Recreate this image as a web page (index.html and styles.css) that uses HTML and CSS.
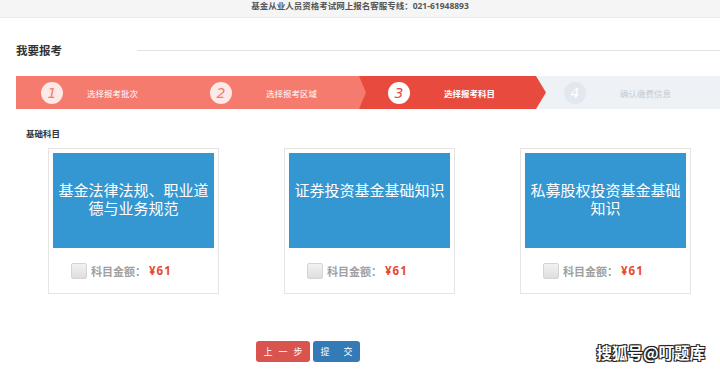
FILE: index.html
```html
<!DOCTYPE html>
<html lang="zh-CN">
<head>
    <meta charset="UTF-8">
    <meta name="viewport" content="width=device-width, initial-scale=1.0">
    <title>我要报考</title>
    <link rel="stylesheet" href="styles.css">
</head>
<body>
    <div class="topbar">基金从业人员资格考试网上报名客服专线：021-61948893</div>

    <div class="page">
        <div class="title-row">
            <h2>我要报考</h2>
            <span class="title-line"></span>
        </div>

        <div class="steps">
            <div class="step step-done step-first">
                <span class="step-num">1</span>
                <span class="step-text">选择报考批次</span>
            </div>
            <div class="step step-done step-second">
                <span class="step-num">2</span>
                <span class="step-text">选择报考区域</span>
            </div>
            <div class="step step-active">
                <span class="step-num">3</span>
                <span class="step-text">选择报考科目</span>
            </div>
            <div class="step step-todo">
                <span class="step-num">4</span>
                <span class="step-text">确认缴费信息</span>
            </div>
        </div>

        <div class="group-title">基础科目</div>

        <div class="subjects">
            <div class="subject">
                <div class="subject-name">基金法律法规、职业道德与业务规范</div>
                <label class="subject-foot">
                    <span class="check"></span>
                    <span class="price-label">科目金额：</span>
                    <span class="price">¥61</span>
                </label>
            </div>
            <div class="subject">
                <div class="subject-name">证券投资基金基础知识</div>
                <label class="subject-foot">
                    <span class="check"></span>
                    <span class="price-label">科目金额：</span>
                    <span class="price">¥61</span>
                </label>
            </div>
            <div class="subject">
                <div class="subject-name">私募股权投资基金基础知识</div>
                <label class="subject-foot">
                    <span class="check"></span>
                    <span class="price-label">科目金额：</span>
                    <span class="price">¥61</span>
                </label>
            </div>
        </div>

        <div class="actions">
            <button class="btn btn-prev">上一步</button>
            <button class="btn btn-submit">提 交</button>
        </div>
    </div>

    <div class="watermark">搜狐号@叮题库</div>
</body>
</html>
```

FILE: styles.css
```css
body {
    margin: 0;
    background: #fff;
    font-family: "Open Sans", "Noto Sans CJK SC", sans-serif;
    color: #333;
    position: relative;
    height: 371px;
    overflow: hidden;
}
.topbar {
    height: 18px;
    background: #f5f5f5;
    border-bottom: 1px solid #ececec;
    box-sizing: border-box;
    text-align: center;
    font-size: 8.5px;
    font-weight: bold;
    line-height: 11px;
    color: #555;
}
.page {
    padding-left: 16px;
}
.title-row {
    display: flex;
    align-items: center;
    height: 24px;
    margin-top: 20px;
}
h2 {
    margin: 0;
    font-size: 11.5px;
    font-weight: bold;
    color: #333;
    width: 121px;
}
.title-line {
    flex: 1;
    height: 1px;
    background: #e3e3e3;
}
.steps {
    display: flex;
    height: 33px;
    margin-top: 14px;
    background: #fbb0a7;
}
.step {
    display: flex;
    align-items: center;
    height: 33px;
    box-sizing: border-box;
    padding-left: 27px;
    gap: 34px;
    font-size: 8.5px;
    color: #fff;
    position: relative;
}
.step-first {
    width: 175px;
    padding-left: 25px;
    gap: 24px;
    background: #f47b6e;
    clip-path: polygon(0 0, calc(100% - 7px) 0, 100% 50%, calc(100% - 7px) 100%, 0 100%);
    z-index: 3;
}
.step-second {
    width: 183px;
    margin-left: -8px;
    background: #f47b6e;
    clip-path: polygon(0 0, calc(100% - 7px) 0, 100% 50%, calc(100% - 7px) 100%, 0 100%, 7px 50%);
    z-index: 2;
}
.step-active {
    width: 188px;
    margin-left: -8px;
    padding-left: 30px;
    background: #e84a3d;
    clip-path: polygon(0 0, calc(100% - 10px) 0, 100% 50%, calc(100% - 10px) 100%, 0 100%, 7px 50%);
    z-index: 1;
    font-weight: bold;
}
.step-todo {
    flex: 1;
    margin-left: -11px;
    padding-left: 29px;
    background: #eef1f6;
    color: #c6cbd4;
}
.step-num {
    width: 22px;
    height: 22px;
    border-radius: 50%;
    background: #fde9e5;
    color: #f47b6e;
    font-family: "DejaVu Sans", sans-serif;
    font-size: 14px;
    font-style: italic;
    font-weight: 200;
    line-height: 22px;
    text-align: center;
    flex: none;
}
.step-active .step-num {
    background: #fff;
    color: #e84a3d;
    font-weight: normal;
}
.step-todo .step-num {
    background: #e3e7ef;
    color: #fff;
}
.group-title {
    margin-top: 19px;
    padding-left: 10px;
    font-size: 8.5px;
    font-weight: bold;
    line-height: 12px;
    color: #333;
}
.subjects {
    display: flex;
    gap: 65px;
    margin-top: 8px;
    padding-left: 32px;
}
.subject {
    width: 171px;
    box-sizing: border-box;
    border: 1px solid #e4e4e4;
    padding: 4px 4px 0;
    background: #fff;
}
.subject-name {
    height: 95px;
    box-sizing: border-box;
    background: #3597d1;
    color: #fff;
    font-size: 15px;
    line-height: 18px;
    padding: 28px 2px 0;
    text-align: center;
}
.subject-foot {
    display: flex;
    align-items: center;
    height: 45px;
    padding-left: 18px;
}
.check {
    width: 14px;
    height: 14px;
    border: 1px solid #d4d4d4;
    border-radius: 2px;
    background: linear-gradient(#f2f2f2, #dedede);
    margin-right: 4px;
}
.price-label {
    font-size: 11px;
    font-weight: bold;
    color: #a0a0a0;
}
.price {
    font-size: 11.5px;
    font-weight: bold;
    color: #e8492e;
    margin-left: 3px;
    letter-spacing: 1px;
}
.actions {
    display: flex;
    gap: 3px;
    margin-top: 47px;
    padding-left: 240px;
}
.btn {
    height: 21px;
    border: none;
    border-radius: 3px;
    color: #fff;
    font-family: "Noto Sans CJK SC", sans-serif;
    font-size: 9px;
    white-space: nowrap;
    padding: 0;
    text-align: center;
    cursor: pointer;
}
.btn-prev {
    width: 54px;
    background: #d9534f;
    letter-spacing: 6px;
    text-indent: 6px;
}
.btn-submit {
    width: 47px;
    background: #337ab7;
    letter-spacing: 4px;
    word-spacing: 4px;
    text-indent: 4px;
}
.watermark {
    position: absolute;
    right: 15px;
    bottom: 8px;
    font-family: "Noto Sans CJK SC", sans-serif;
    font-size: 15.5px;
    font-weight: bold;
    color: #fff;
    text-shadow: -1px -1px 0 #222, 1px -1px 0 #222, -1px 1px 0 #222, 1px 1px 0 #222, 0 0 2px #000;
}
```
